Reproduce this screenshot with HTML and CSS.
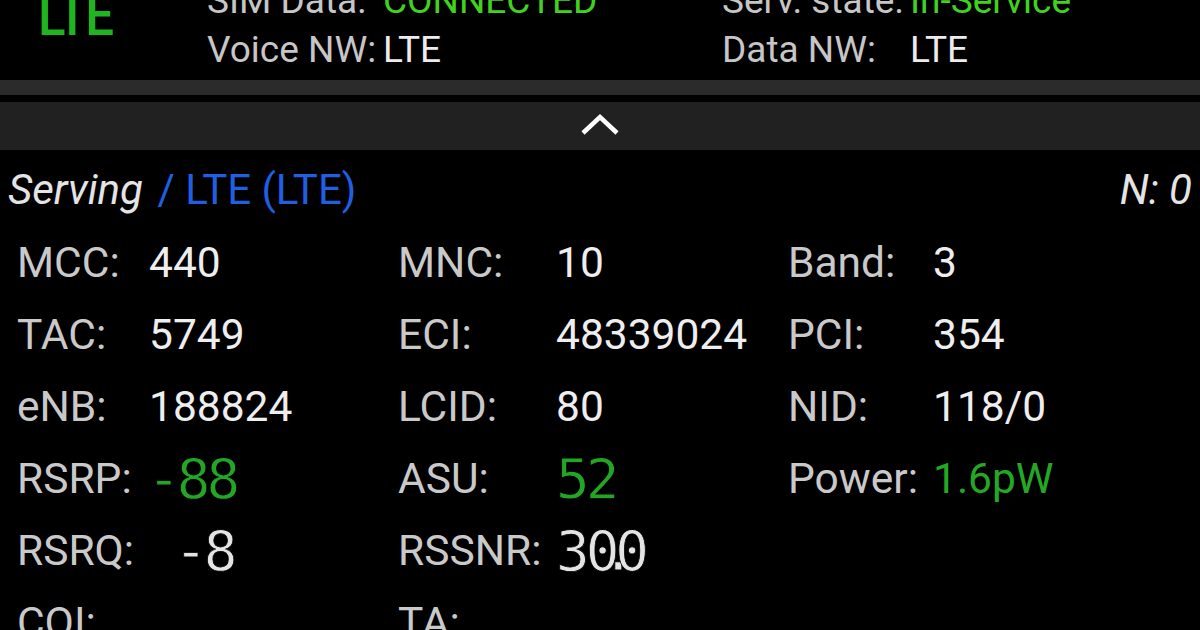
FILE: index.html
```html
<!DOCTYPE html>
<html lang="en">
<head>
    <meta charset="UTF-8">
    <meta name="viewport" content="width=device-width, initial-scale=1.0">
    <title>LTE Serving Cell</title>
    <link rel="stylesheet" href="styles.css">
</head>
<body>
    <div class="status">
        <div class="logo"><span>LTE</span></div>
        <div class="info">
            <div class="line"><span class="key key-a">SIM Data:</span><span class="ok">CONNECTED</span></div>
            <div class="line"><span class="key key-a">Voice NW:</span><span class="val">LTE</span></div>
        </div>
        <div class="info">
            <div class="line"><span class="key key-b">Serv. state:</span><span class="ok">In-Service</span></div>
            <div class="line"><span class="key key-b">Data NW:</span><span class="val">LTE</span></div>
        </div>
    </div>

    <div class="bar"></div>

    <div class="toggle">
        <svg width="40" height="24" viewBox="0 0 40 24">
            <polyline points="3,20 20,4 37,20" fill="none" stroke="#fff" stroke-width="4.5"/>
        </svg>
    </div>

    <div class="serving">
        <div class="title"><em>Serving</em> <span class="rat">/ LTE (LTE)</span></div>
        <div class="count">N: 0</div>
    </div>

    <div class="cells">
        <div class="cell"><span class="k k1">MCC:</span><span class="v">440</span></div>
        <div class="cell"><span class="k k2">MNC:</span><span class="v">10</span></div>
        <div class="cell"><span class="k k3">Band:</span><span class="v">3</span></div>

        <div class="cell"><span class="k k1">TAC:</span><span class="v">5749</span></div>
        <div class="cell"><span class="k k2">ECI:</span><span class="v">48339024</span></div>
        <div class="cell"><span class="k k3">PCI:</span><span class="v">354</span></div>

        <div class="cell"><span class="k k1">eNB:</span><span class="v">188824</span></div>
        <div class="cell"><span class="k k2">LCID:</span><span class="v">80</span></div>
        <div class="cell"><span class="k k3">NID:</span><span class="v">118/0</span></div>

        <div class="cell"><span class="k k1">RSRP:</span><span class="seg green rsrp">-88</span></div>
        <div class="cell"><span class="k k2">ASU:</span><span class="seg green">52</span></div>
        <div class="cell"><span class="k k3">Power:</span><span class="v green-text">1.6pW</span></div>

        <div class="cell"><span class="k k1">RSRQ:</span><span class="seg rsrq">-8</span></div>
        <div class="cell"><span class="k k2">RSSNR:</span><span class="seg">30<span class="dot">.</span>0</span></div>
        <div class="cell"></div>

        <div class="cell"><span class="k k1">CQI:</span></div>
        <div class="cell"><span class="k k2">TA:</span></div>
        <div class="cell"></div>
    </div>
</body>
</html>
```

FILE: styles.css
```css
body {
    margin: 0;
    background-color: #000;
    font-family: Roboto, "Liberation Sans", sans-serif;
    color: #ececec;
    overflow: hidden;
    height: 630px;
}
/* top status block, partly scrolled out of view */
.status {
    display: flex;
    align-items: flex-start;
    margin-top: -24px;
    height: 104px;
    overflow: hidden;
}
.logo {
    flex-shrink: 0;
    width: 169px;
    padding-left: 38px;
    margin-top: 10px;
    font-size: 58px;
    line-height: 58px;
    font-weight: 500;
    letter-spacing: -3px;
    color: #1fb51f;
}
.logo span {
    display: inline-block;
    transform: scaleX(0.88);
    transform-origin: left center;
}
.info {
    flex-shrink: 0;
    width: 515px;
    font-size: 37px;
    line-height: 49px;
}
.line {
    display: flex;
    white-space: nowrap;
}
.key {
    color: #c6c6c6;
}
.key-a {
    width: 176px;
}
.key-b {
    width: 188px;
}
.val {
    color: #ececec;
}
.ok {
    color: #40d21f;
}
.bar {
    height: 15px;
    background-color: #2b2b2b;
    margin-bottom: 7px;
}
.toggle {
    height: 48px;
    background-color: #212121;
    display: flex;
    justify-content: center;
    align-items: center;
}
.toggle svg {
    display: block;
    margin-top: -2px;
}
/* serving cell header */
.serving {
    display: flex;
    justify-content: space-between;
    padding: 10px 8px 0 8px;
    margin-bottom: 7px;
    font-size: 42px;
    line-height: 60px;
}
.title em,
.count {
    font-style: italic;
    color: #e4e4e4;
}
.rat {
    margin-left: 4px;
    color: #1f5fe0;
}
/* cell parameters */
.cells {
    display: grid;
    grid-template-columns: 381px 390px 1fr;
    grid-auto-rows: 72px;
    padding-left: 17px;
    font-size: 42.5px;
    line-height: 72px;
}
.cell {
    display: flex;
    white-space: nowrap;
}
.k {
    color: #c9c9c9;
}
.k1 {
    width: 132px;
}
.k2 {
    width: 158px;
}
.k3 {
    width: 145px;
}
.v {
    color: #eeeeee;
}
.green-text {
    color: #24a824;
}
/* LCD style readings */
.seg {
    font-family: "DejaVu Sans Mono", "Liberation Mono", monospace;
    font-size: 56px;
    letter-spacing: -4px;
    color: #e4e4e4;
    -webkit-text-stroke: 0.8px #000;
}
.seg.green {
    color: #25a525;
}
.rsrp {
    margin-left: -2px;
}
.rsrq {
    margin-left: 25px;
}
.dot {
    margin: 0 -16px 0 -14px;
}
```
